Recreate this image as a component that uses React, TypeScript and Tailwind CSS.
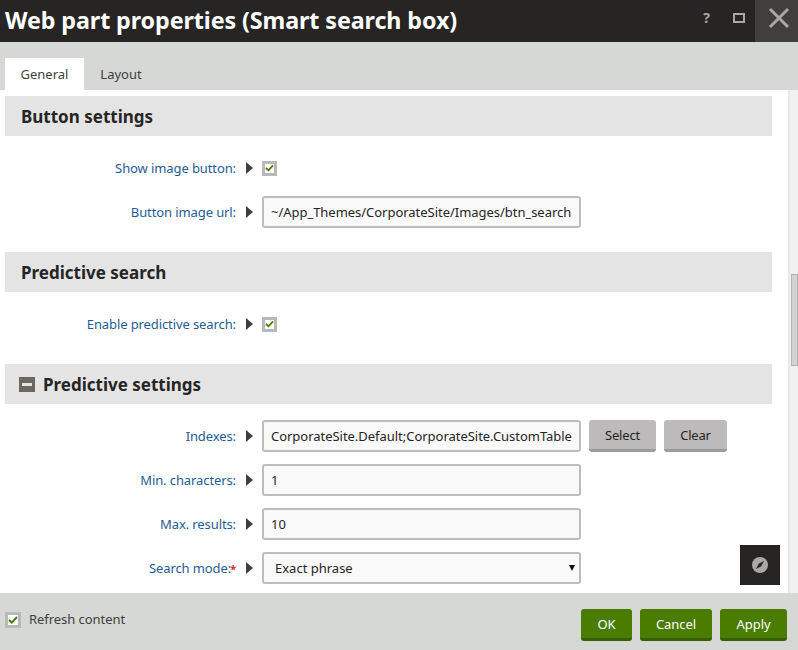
import React from "react";

const font = "font-['Noto_Sans','Open_Sans',sans-serif]";

function Check({ className }: { className: string }) {
  return (
    <span className={`flex items-center justify-center border-[3px] border-[#b9b9b9] bg-white ${className}`}>
      <svg width="10" height="8" viewBox="0 0 10 8" fill="none">
        <path d="M1 4l2.8 2.6L9 1" stroke="#4a7c00" strokeWidth="2" />
      </svg>
    </span>
  );
}

function SectionHead({ title, collapsible, className }: { title: string; collapsible?: boolean; className: string }) {
  return (
    <div className={`flex h-10 w-[767px] items-center gap-2 bg-[#e4e4e4] ${collapsible ? "pl-[14px]" : "pl-4"} ${className}`}>
      {collapsible && (
        <span className="flex h-[15px] w-4 items-center justify-center bg-[#6b6864]">
          <span className="h-[3px] w-2.5 bg-[#e4e4e4]" />
        </span>
      )}
      <h2 className="text-[17px] leading-none font-bold text-[#262524]">{title}</h2>
    </div>
  );
}

function Row({ label, required, children, className }: { label: string; required?: boolean; children: React.ReactNode; className: string }) {
  return (
    <div className={`-ml-[5px] flex items-center ${className}`}>
      <label className="w-[236px] pt-[2px] text-right text-[13px] tracking-[-0.1px] whitespace-nowrap text-[#1f5c94]">
        {label}
        {required && <span className="-ml-px text-[11px] font-bold text-[#e6231e]">*</span>}
      </label>
      <svg className="mr-[9px] ml-[10px]" width="7" height="12" viewBox="0 0 7 12">
        <path d="M0 0l7 6-7 6z" fill="#403f3e" />
      </svg>
      {children}
    </div>
  );
}

function TextBox({ value }: { value: string }) {
  return (
    <div className="flex h-8 w-[319px] items-center overflow-hidden rounded-[3px] border-2 border-[#bdbdbd] bg-[#f9f9f9] pt-[2px] pl-[7px] text-[13px] tracking-[-0.03px] whitespace-nowrap text-[#262524]">
      {value}
    </div>
  );
}

function GrayButton({ children, className }: { children: React.ReactNode; className: string }) {
  return (
    <button className={`h-8 rounded-[3px] border-b-[3px] border-[#9c9a9a] bg-[#bcbaba] pt-[2px] text-[13px] tracking-[-0.2px] text-[#262524] ${className}`}>
      {children}
    </button>
  );
}

function GreenButton({ children, className }: { children: React.ReactNode; className: string }) {
  return (
    <button className={`h-8 rounded-[3px] border-b-[3px] border-[#366000] bg-[#4a7c00] pt-[2px] text-[13px] text-white ${className}`}>
      {children}
    </button>
  );
}

export default function App() {
  return (
    <div className={`relative flex h-[650px] w-[798px] flex-col overflow-hidden bg-[#d6d8d5] ${font}`}>
      <header className="flex h-[42px] items-center justify-between bg-[#262524] pl-[5px] text-white">
        <h1 className="text-[23.3px] leading-none font-bold tracking-[-0.1px] whitespace-nowrap">Web part properties (Smart search box)</h1>
        <div className="flex h-full items-start">
          <span className="mt-[8px] mr-[23px] text-sm leading-5 font-bold text-[#a9a8a7]">?</span>
          <span className="mt-[13px] mr-[10px] h-[10px] w-3 border-2 border-[#a9a8a7]" />
          <span className="flex h-full w-[43px] justify-center bg-[#403f3e] pt-[7px] pl-[5px]">
            <svg width="22" height="22" viewBox="0 0 22 22">
              <path d="M2 2l18 18M20 2L2 20" stroke="#a9a8a7" strokeWidth="3" />
            </svg>
          </span>
        </div>
      </header>

      <nav className="flex h-12 items-end pl-[5px] text-[13px] text-[#403f3e]">
        <span className="flex h-8 w-[79px] items-center justify-center bg-white pt-[2px]">General</span>
        <span className="flex h-8 w-[74px] items-center justify-center pt-[2px]">Layout</span>
      </nav>

      <main className="flex h-[503px] bg-white">
        <div className="w-[788px] overflow-hidden pt-1.5 pl-[5px]">
          <SectionHead title="Button settings" className="" />
          <Row label="Show image button:" className="mt-6 h-4">
            <Check className="h-[15px] w-[15px]" />
          </Row>
          <Row label="Button image url:" className="mt-5 h-8">
            <TextBox value="~/App_Themes/CorporateSite/Images/btn_search" />
          </Row>
          <SectionHead title="Predictive search" className="mt-6" />
          <Row label="Enable predictive search:" className="mt-6 h-4">
            <Check className="h-[15px] w-[15px]" />
          </Row>
          <SectionHead title="Predictive settings" collapsible className="mt-8" />
          <Row label="Indexes:" className="mt-4 h-8">
            <TextBox value="CorporateSite.Default;CorporateSite.CustomTable" />
            <GrayButton className="ml-2 w-[67px]">Select</GrayButton>
            <GrayButton className="ml-2 w-[63px]">Clear</GrayButton>
          </Row>
          <Row label="Min. characters:" className="mt-3 h-8">
            <TextBox value="1" />
          </Row>
          <Row label="Max. results:" className="mt-3 h-8">
            <TextBox value="10" />
          </Row>
          <Row label="Search mode:" required className="mt-3 h-8">
            <div className="flex h-8 w-[319px] items-center justify-between rounded-[3px] border-2 border-[#bdbdbd] bg-[#f9f9f9] pr-1 pl-[11px] text-[13px] text-[#262524]">
              <span className="pt-[2px]">Exact phrase</span>
              <svg width="6" height="6" viewBox="0 0 6 6">
                <path d="M0 0h6L3 6z" fill="#111" />
              </svg>
            </div>
          </Row>
        </div>
        <div className="w-2.5 border-l-2 border-[#e8e8e8] bg-[#f1f1f1] pt-[184px] pl-px">
          <div className="h-[92px] w-full border border-[#b5b5b5] bg-[#d3d3d3]" />
        </div>
      </main>

      <footer className="flex flex-1 items-start justify-between pt-4 pr-[11px] pl-[5px] text-[13px] tracking-[-0.05px] text-[#403f3e]">
        <div className="mt-[2px] flex items-center gap-2">
          <Check className="h-4 w-4" />
          <span className="-mt-px">Refresh content</span>
        </div>
        <div className="flex gap-2">
          <GreenButton className="w-[51px]">OK</GreenButton>
          <GreenButton className="w-[72px]">Cancel</GreenButton>
          <GreenButton className="w-[67px]">Apply</GreenButton>
        </div>
      </footer>

      <button className="absolute top-[545px] left-[740px] flex h-10 w-10 items-center justify-center bg-[#262524]">
        <svg width="16" height="16" viewBox="0 0 16 16">
          <circle cx="8" cy="8" r="8" fill="#a9a8a7" />
          <path d="M12 4L9.3 9.3 4 12l2.7-5.3z" fill="#262524" />
        </svg>
      </button>
    </div>
  );
}
